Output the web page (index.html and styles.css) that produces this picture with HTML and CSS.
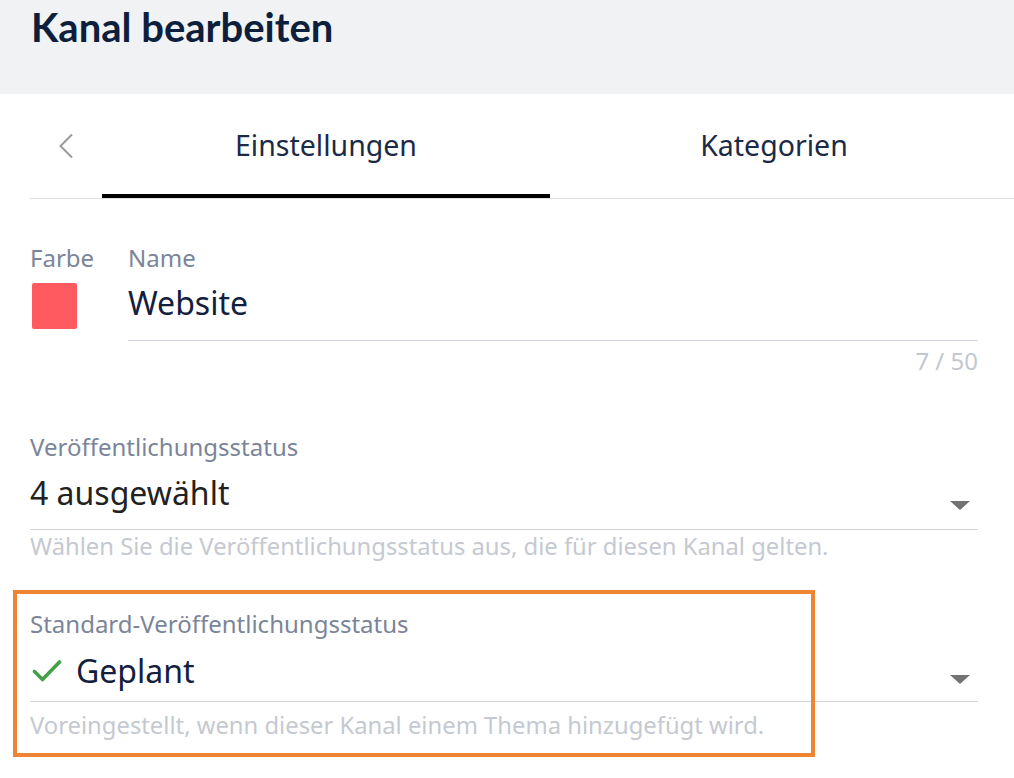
FILE: index.html
```html
<!DOCTYPE html>
<html lang="de">
<head>
<meta charset="utf-8">
<title>Kanal bearbeiten</title>
<link rel="stylesheet" href="styles.css">
</head>
<body>
<header class="page-header">
  <h1 class="page-title">Kanal bearbeiten</h1>
</header>
<main class="content">
  <nav class="tabs">
    <button class="tab-back" type="button" aria-label="Zurück">
      <svg width="16" height="26" viewBox="0 0 16 26"><polyline points="14,1.5 2.5,13 14,24.5" fill="none" stroke="#9b9b9b" stroke-width="2"/></svg>
    </button>
    <div class="tab active">Einstellungen</div>
    <div class="tab">Kategorien</div>
  </nav>
  <form class="form">
    <div class="row-name">
      <div class="color-field">
        <span class="label">Farbe</span>
        <span class="swatch"></span>
      </div>
      <div class="name-field">
        <span class="label">Name</span>
        <div class="input">Website</div>
        <div class="counter">7 / 50</div>
      </div>
    </div>
    <div class="select-field">
      <span class="label">Veröffentlichungsstatus</span>
      <div class="select">
        <span class="value value-plain">4 ausgewählt</span>
        <span class="caret"></span>
      </div>
      <p class="helper">Wählen Sie die Veröffentlichungsstatus aus, die für diesen Kanal gelten.</p>
    </div>
    <div class="select-field select-default">
      <span class="label">Standard-Veröffentlichungsstatus</span>
      <div class="select">
        <svg class="check" width="30" height="26" viewBox="0 0 30 26"><polyline points="2.5,13.5 10.5,21.5 27.5,4" fill="none" stroke="#43a047" stroke-width="3.6" stroke-linecap="round" stroke-linejoin="round"/></svg>
        <span class="value">Geplant</span>
        <span class="caret"></span>
      </div>
      <p class="helper">Voreingestellt, wenn dieser Kanal einem Thema hinzugefügt wird.</p>
      <div class="highlight"></div>
    </div>
  </form>
</main>
</body>
</html>
```

FILE: styles.css
```css
* { box-sizing: border-box; }

body {
  margin: 0;
  background: #ffffff;
  font-family: "Noto Sans", "Open Sans", sans-serif;
  color: #13203d;
}

.page-header {
  height: 94px;
  background: #f1f2f4;
  padding-left: 31px;
}

.page-title {
  margin: 0;
  font-family: Lato, "Noto Sans", sans-serif;
  font-size: 40px;
  line-height: 54px;
  font-weight: 700;
  color: #0d1f3c;
}

.content {
  padding-left: 30px;
}

.tabs {
  display: flex;
  height: 105px;
  border-bottom: 1px solid #e2e2e2;
}

.tab-back {
  width: 72px;
  border: 0;
  background: none;
  padding: 0;
  display: flex;
  align-items: center;
  justify-content: center;
}

.tab {
  width: 448px;
  display: flex;
  align-items: center;
  justify-content: center;
  padding-bottom: 2px;
  font-size: 28.5px;
  color: #1b2a47;
}

.tab.active {
  box-shadow: inset 0 -4px 0 #000;
}

.form {
  padding: 44px 36px 60px 0;
}

.label {
  display: block;
  font-size: 24px;
  line-height: 30px;
  color: #7b8599;
}

.row-name {
  display: flex;
}

.color-field {
  width: 98px;
  flex: none;
}

.swatch {
  display: block;
  width: 45px;
  height: 46px;
  margin: 10px 0 0 2px;
  border-radius: 2px;
  background: #ff5a60;
}

.name-field {
  flex: 1;
}

.input {
  margin-top: 9px;
  padding-bottom: 16px;
  font-size: 32px;
  line-height: 42px;
  color: #13203d;
  border-bottom: 1px solid #d3d6dc;
}

.counter {
  margin-top: 5px;
  text-align: right;
  font-size: 24px;
  line-height: 30px;
  color: #c3c7cf;
}

.select-field {
  position: relative;
  margin-top: 56px;
}

.select {
  display: flex;
  align-items: flex-end;
  margin-top: 10px;
  padding-bottom: 15px;
  border-bottom: 1px solid #d3d6dc;
}

.value {
  flex: 1;
  font-size: 32px;
  line-height: 42px;
  color: #13203d;
}

.value-plain {
  color: #222222;
}

.caret {
  width: 0;
  height: 0;
  margin: 0 8px 4px 0;
  border-left: 10px solid transparent;
  border-right: 10px solid transparent;
  border-top: 9px solid #737373;
}

.helper {
  margin: 3px 0 0;
  font-size: 23.8px;
  line-height: 26px;
  color: #c5c9d1;
}

.select-default {
  margin-top: 50px;
}

.select-default .select {
  margin-top: 11px;
  padding-bottom: 9px;
}

.select-default .caret {
  margin-bottom: 8px;
}

.select-default .helper {
  margin-top: 10px;
}

.check {
  flex: none;
  align-self: center;
  margin: 0 14px 0 2px;
}

.highlight {
  position: absolute;
  left: -17px;
  top: -19px;
  width: 802px;
  height: 167px;
  border: 4px solid #ef8533;
  pointer-events: none;
}
```
